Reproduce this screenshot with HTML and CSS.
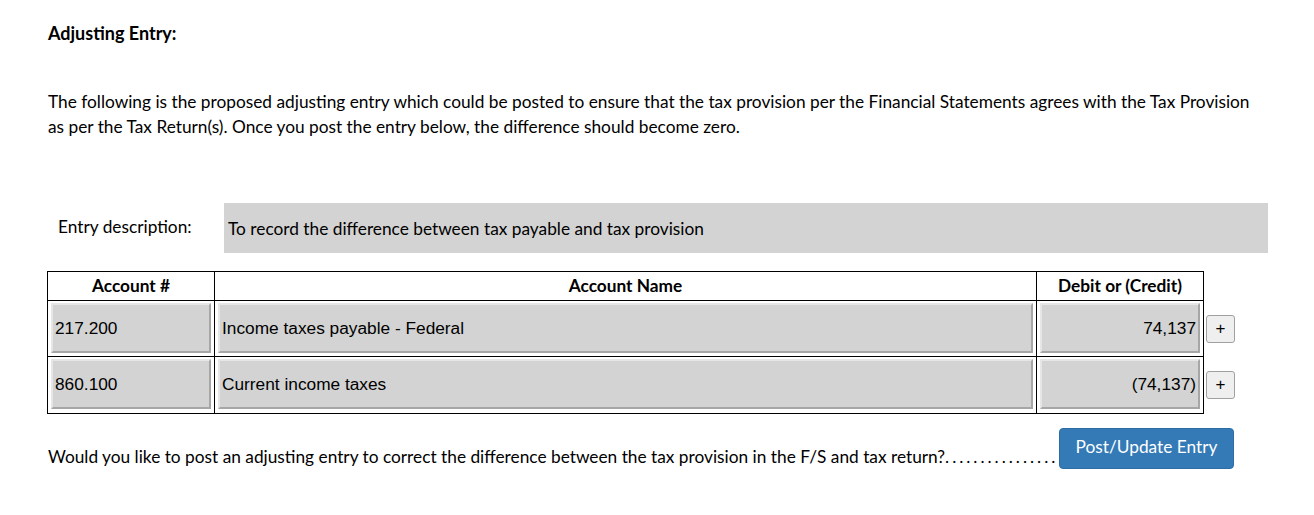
FILE: index.html
```html
<!DOCTYPE html>
<html lang="en">

<head>
    <meta charset="UTF-8" />
    <meta name="viewport" content="width=device-width, initial-scale=1.0" />
    <title>Adjusting Entry</title>
    <link rel="stylesheet" href="styles.css">
</head>

<body>
    <div class="page">
        <h3 class="title">Adjusting Entry:</h3>

        <p class="intro">The following is the proposed adjusting entry which could be posted to ensure that the tax provision per the Financial Statements agrees with the Tax Provision as per the Tax Return(s). Once you post the entry below, the difference should become zero.</p>

        <!-- Entry description -->
        <div class="desc-row">
            <label class="desc-label" for="entryDesc">Entry description:</label>
            <div class="desc-box" id="entryDesc">To record the difference between tax payable and tax provision</div>
        </div>

        <table class="entry-table">
            <thead>
                <tr>
                    <th class="col-num">Account #</th>
                    <th class="col-name">Account Name</th>
                    <th class="col-amt">Debit or (Credit)</th>
                    <th class="col-add"></th>
                </tr>
            </thead>
            <tbody>
                <tr>
                    <td><input class="cell-input" type="text" value="217.200" readonly /></td>
                    <td><input class="cell-input" type="text" value="Income taxes payable - Federal" readonly /></td>
                    <td><input class="cell-input amount" type="text" value="74,137" readonly /></td>
                    <td class="col-add"><button class="add-btn">+</button></td>
                </tr>
                <tr class="last-row">
                    <td><input class="cell-input" type="text" value="860.100" readonly /></td>
                    <td><input class="cell-input" type="text" value="Current income taxes" readonly /></td>
                    <td><input class="cell-input amount" type="text" value="(74,137)" readonly /></td>
                    <td class="col-add"><button class="add-btn">+</button></td>
                </tr>
            </tbody>
        </table>

        <div class="post-row">
            <span class="post-question">Would you like to post an adjusting entry to correct the difference between the tax provision in the F/S and tax return?</span>
            <span class="dots">................</span>
            <button class="post-btn">Post/Update Entry</button>
        </div>
    </div>
</body>

</html>
```

FILE: styles.css
```css
* {
    margin: 0;
    padding: 0;
    box-sizing: border-box;
}

body {
    font-family: Lato, "Liberation Sans", sans-serif;
    font-size: 17.3px;
    color: #000;
    background-color: #fff;
}

.page {
    width: 1314px;
    padding: 21px 0 0 47px;
}

.title {
    font-size: 18px;
    font-weight: bold;
    line-height: 24px;
    margin-left: 1px;
}

.intro {
    margin-top: 44px;
    margin-left: 1px;
    width: 1215px;
    line-height: 25px;
}

.desc-row {
    display: flex;
    align-items: center;
    margin-top: 64px;
}

.desc-label {
    width: 177px;
    padding-left: 11px;
    margin-top: -4px;
}

.desc-box {
    width: 1044px;
    height: 50px;
    padding-left: 4px;
    padding-top: 3px;
    line-height: 45px;
    background-color: #d3d3d3;
}

.entry-table {
    margin-top: 18px;
    border-collapse: collapse;
}

.entry-table th,
.entry-table td {
    border: 1px solid #000;
    padding: 2px 3px 3px;
}

.entry-table th {
    height: 29px;
    font-weight: bold;
    text-align: center;
    padding: 0 0 1px;
}

.last-row td {
    padding-bottom: 4px;
}

.col-num {
    width: 167px;
}

.col-name {
    width: 822px;
}

.col-amt {
    width: 167px;
}

.entry-table th.col-add,
.entry-table td.col-add {
    border: none;
    padding: 0 0 0 2px;
    width: 40px;
    vertical-align: middle;
}

.cell-input {
    display: block;
    width: 100%;
    height: 50px;
    font-family: "Liberation Sans", Arial, sans-serif;
    font-size: 17.3px;
    color: #000;
    background-color: #d3d3d3;
    border: 2px solid;
    border-color: #e6e6e6 #a6a6a6 #a6a6a6 #e6e6e6;
    padding: 0 2px;
    outline: none;
}

.amount {
    text-align: right;
}

.add-btn {
    width: 29px;
    height: 28px;
    font-family: "Liberation Sans", Arial, sans-serif;
    font-size: 17px;
    color: #000;
    background-color: #efefef;
    border: 1px solid #a0a0a0;
    border-radius: 3px;
    cursor: pointer;
}

.post-row {
    display: flex;
    align-items: flex-end;
    width: 1186px;
    margin-top: 14px;
    margin-left: 1px;
}

.post-question {
    white-space: nowrap;
    line-height: 24px;
}

.dots {
    white-space: nowrap;
    line-height: 24px;
    letter-spacing: 3px;
}

.post-btn {
    flex-shrink: 0;
    width: 175px;
    height: 41px;
    margin-left: auto;
    font-family: Lato, "Liberation Sans", sans-serif;
    font-size: 17.3px;
    color: #fff;
    background-color: #337ab7;
    border: 1px solid #2e6da4;
    border-radius: 4px;
    padding-bottom: 5px;
    cursor: pointer;
}

.post-btn:hover {
    background-color: #286090;
}
```
